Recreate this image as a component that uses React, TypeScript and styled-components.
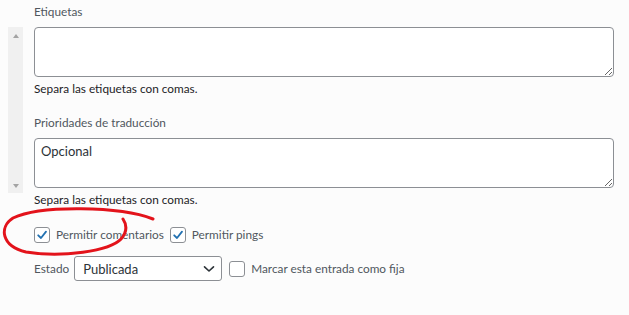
import * as React from 'react';
import styled, { createGlobalStyle } from 'styled-components';

const GlobalStyle = createGlobalStyle`
    html, body {
        margin: 0;
        padding: 0;
        background: #fcfcfc;
    }
    body {
        font-family: Lato, "Noto Sans", sans-serif;
        font-size: 11.8px;
        color: #2c3338;
    }
`;

const Page = styled.div`
    position: relative;
    width: 629px;
    height: 315px;
    overflow: hidden;
    background: #fcfcfc;
`;

const Label = styled.div`
    padding: 3px 0 0 34px;
    height: 18px;
    line-height: 18px;
    color: #50575e;
    font-size: 11.8px;
`;

const Body = styled.div`
    display: flex;
    margin-top: 6px;
`;

const Gutter = styled.div`
    width: 34px;
    flex: 0 0 34px;
`;

const Scrollbar = styled.div`
    margin-left: 8px;
    width: 15px;
    height: 166px;
    background: #f0f0f0;
    display: flex;
    flex-direction: column;
    justify-content: space-between;
    align-items: center;
    padding: 7px 0 5px;
    box-sizing: border-box;
`;

const Arrow = styled.div<{ $down?: boolean }>`
    width: 0;
    height: 0;
    border-left: 3.5px solid transparent;
    border-right: 3.5px solid transparent;
    ${(p) => (p.$down ? 'border-top: 4px solid #a3a3a3;' : 'border-bottom: 4px solid #a3a3a3;')}
`;

const Fields = styled.div`
    flex: 1;
    padding-right: 15px;
    display: flex;
    flex-direction: column;
`;

const TextArea = styled.textarea`
    display: block;
    width: 580px;
    height: 50px;
    box-sizing: border-box;
    border: 1px solid #8c8f94;
    border-radius: 4px;
    background: #fff;
    font-family: Lato, "Noto Sans", sans-serif;
    font-size: 13px;
    color: #2c3338;
    padding: 4px 6px;
    margin: 0;
    outline: none;
`;

const Help = styled.div`
    height: 18px;
    line-height: 18px;
    margin-top: 3px;
    font-size: 11.8px;
    color: #1d2327;
`;

const SubLabel = styled.div`
    height: 18px;
    line-height: 18px;
    margin-top: 16px;
    margin-bottom: 6px;
    font-size: 11.8px;
    color: #50575e;
`;

const Options = styled.div`
    padding-left: 34px;
    margin-top: 13px;
    display: flex;
    flex-direction: column;
    gap: 9px;
`;

const Row = styled.div`
    display: flex;
    align-items: center;
    height: 25px;
    font-size: 11.8px;
    color: #50575e;
`;

const Check = styled.div<{ $checked?: boolean }>`
    width: 14px;
    height: 14px;
    border: 1px solid #8c8f94;
    border-radius: 3px;
    background: #fff;
    display: flex;
    align-items: center;
    justify-content: center;
    margin-right: 6px;
    flex: 0 0 auto;
`;

const CheckItem = styled.label`
    display: flex;
    align-items: center;
    margin-right: 6px;
`;

const Select = styled.div`
    margin-left: 5px;
    width: 148px;
    height: 25px;
    box-sizing: border-box;
    border: 1px solid #8c8f94;
    border-radius: 3px;
    background: #fff;
    display: flex;
    align-items: center;
    justify-content: space-between;
    padding: 0 6px 0 8px;
    font-size: 13px;
    color: #2c3338;
    margin-right: 7px;
`;

const Annotation = styled.svg`
    position: absolute;
    left: 0;
    top: 0;
    pointer-events: none;
`;

function Tick() {
    return (
        <svg width="12" height="12" viewBox="0 0 12 12">
            <path d="M2.2 6.3 L5 9 L10 2.6" fill="none" stroke="#2271b1" strokeWidth="1.8" strokeLinecap="round" strokeLinejoin="round" />
        </svg>
    );
}

function Chevron() {
    return (
        <svg width="12" height="8" viewBox="0 0 12 8">
            <path d="M1.5 1.8 L6 6 L10.5 1.8" fill="none" stroke="#2c3338" strokeWidth="1.6" strokeLinecap="round" strokeLinejoin="round" />
        </svg>
    );
}

function Box({ checked, children }: { checked?: boolean; children: React.ReactNode }) {
    return (
        <CheckItem>
            <Check $checked={checked}>{checked && <Tick />}</Check>
            {children}
        </CheckItem>
    );
}

export default function App() {
    return (
        <Page>
            <GlobalStyle />
            <Label>Etiquetas</Label>
            <Body>
                <Gutter>
                    <Scrollbar>
                        <Arrow />
                        <Arrow $down />
                    </Scrollbar>
                </Gutter>
                <Fields>
                    <TextArea defaultValue="" />
                    <Help>Separa las etiquetas con comas.</Help>
                    <SubLabel>Prioridades de traducción</SubLabel>
                    <TextArea defaultValue="Opcional" />
                    <Help>Separa las etiquetas con comas.</Help>
                </Fields>
            </Body>
            <Options>
                <Row>
                    <Box checked>Permitir comentarios</Box>
                    <Box checked>Permitir pings</Box>
                </Row>
                <Row>
                    Estado
                    <Select>
                        <span>Publicada</span>
                        <Chevron />
                    </Select>
                    <Box>Marcar esta entrada como fija</Box>
                </Row>
            </Options>
            <Annotation width="629" height="315">
                <path
                    d="M153 219 C 120 206, 40 205, 13 218 C -1 227, 1 246, 26 252 C 62 258, 110 251, 121 239 C 127 232, 127 225, 123 219"
                    fill="none"
                    stroke="#e3131b"
                    strokeWidth="3"
                    strokeLinecap="round"
                />
            </Annotation>
        </Page>
    );
}
